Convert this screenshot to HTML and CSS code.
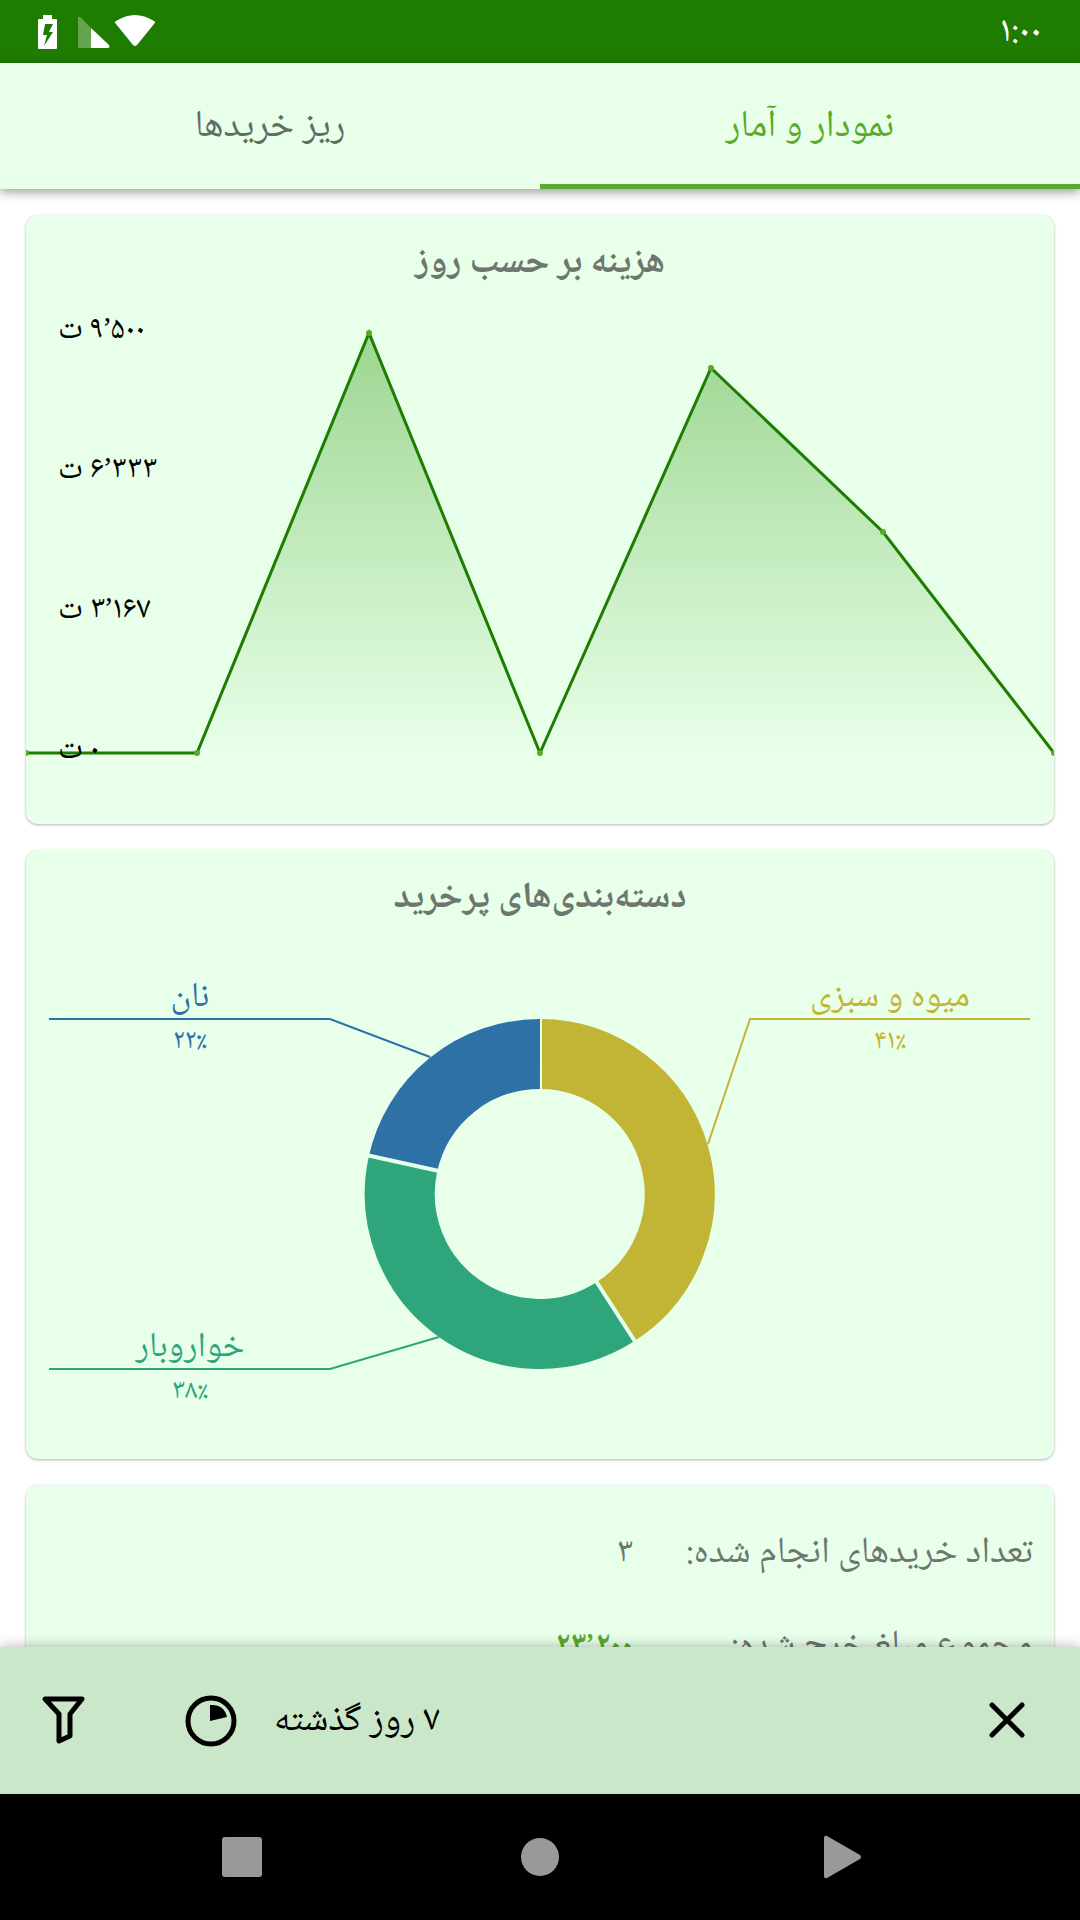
FILE: index.html
```html
<!DOCTYPE html>
<html lang="fa" dir="rtl">
<head>
<meta charset="utf-8">
<meta name="viewport" content="width=device-width, initial-scale=1">
<title>نمودار و آمار</title>
<link rel="stylesheet" href="styles.css">
</head>
<body>
<div class="app">
  <header class="status">
    <time class="clock" datetime="13:00">۱:۰۰</time>
    <svg class="status-icons" viewBox="0 0 120 36" aria-hidden="true">
      <path fill="#fff" fill-rule="evenodd" d="M7 1h9v4h4q1 0 1 1v28q0 1-1 1H3q-1 0-1-1V6q0-1 1-1h4zM9 10 7 21h4L8 32 17 18h-4l4-8z"/>
      <path fill="#64a44f" d="M42 4q0-2 2-1l11 11v20H43q-1 0-1-1z"/>
      <path fill="#fff" d="M55 14l18 17q1 3-1 3H55z"/>
      <path fill="#fff" d="M80 10q-2-2 0-3 19-12 38 0 2 1 0 3L101 31q-2 2-4 0z"/>
    </svg>
  </header>
  <nav class="tabs">
    <a class="tab tab-active" href="#stats">نمودار و آمار</a>
    <a class="tab" href="#list">ریز خریدها</a>
  </nav>
  <main class="content" id="stats">
    <section class="card">
      <h2 class="card-title">هزینه بر حسب روز</h2>
      <svg class="chart" viewBox="0 0 1028 529" role="img" aria-label="هزینه بر حسب روز">
        <defs>
          <linearGradient id="area" gradientUnits="userSpaceOnUse" x1="0" y1="38" x2="0" y2="458">
            <stop offset="0" stop-color="#9dd691"/>
            <stop offset="1" stop-color="#e8ffe9"/>
          </linearGradient>
        </defs>
        <path fill="url(#area)" d="M171 458 343 38 514 458 685 73 857 237 1028 458z"/>
        <path class="series" d="M0 458H171L343 38 514 458 685 73 857 237 1028 458"/>
        <g fill="#5aaa2e">
          <circle cx="0" cy="458" r="3"/><circle cx="171" cy="458" r="3"/><circle cx="343" cy="38" r="3"/>
          <circle cx="514" cy="458" r="3"/><circle cx="685" cy="73" r="3"/><circle cx="857" cy="237" r="3"/>
          <circle cx="1028" cy="458" r="3"/>
        </g>
        <g class="axis">
          <text x="32" y="47">۹٬۵۰۰ ت</text>
          <text x="32" y="187">۶٬۳۳۳ ت</text>
          <text x="32" y="327">۳٬۱۶۷ ت</text>
          <text x="32" y="467">۰ ت</text>
        </g>
      </svg>
    </section>
    <section class="card">
      <h2 class="card-title">دسته‌بندی‌های پرخرید</h2>
      <svg class="chart" viewBox="0 0 1028 529" role="img" aria-label="دسته‌بندی‌های پرخرید">
        <g class="ring">
          <path stroke="#c2b434" d="M514 124A140 140 0 0 1 589 382"/>
          <path stroke="#2ea57a" d="M589 382A140 140 0 0 1 377 234"/>
          <path stroke="#2d71a6" d="M377 234A140 140 0 0 1 514 124"/>
        </g>
        <path class="cut" d="M570 351 610 413M413 241 340 225"/>
        <path class="cut cut-thin" d="M515 86V162"/>
        <g class="leader">
          <path stroke="#2d71a6" d="M23 89H304L404 127"/>
          <path stroke="#c2b434" d="M1004 89H724L682 214"/>
          <path stroke="#2ea57a" d="M23 439H304L413 407"/>
        </g>
        <g class="slice">
          <text class="slice-name" fill="#2d71a6" x="164" y="81">نان</text>
          <text class="slice-pct" fill="#2d71a6" x="164" y="122">۲۲٪</text>
          <text class="slice-name" fill="#c2b434" x="864" y="81">میوه و سبزی</text>
          <text class="slice-pct" fill="#c2b434" x="864" y="122">۴۱٪</text>
          <text class="slice-name" fill="#2ea57a" x="164" y="431">خواروبار</text>
          <text class="slice-pct" fill="#2ea57a" x="164" y="472">۳۸٪</text>
        </g>
      </svg>
    </section>
    <section class="card">
      <dl class="totals">
        <dt>تعداد خریدهای انجام شده:</dt>
        <dd>۳</dd>
        <dt>مجموع مبلغ خرج شده:</dt>
        <dd class="amount">۲۳٬۲۰۰</dd>
      </dl>
    </section>
  </main>
  <footer class="toolbar">
    <button class="icon-button" type="button" aria-label="بستن">
      <svg viewBox="0 0 60 60"><path class="stroke" d="M15 14 45 44M45 14 15 44"/></svg>
    </button>
    <button class="range" type="button">
      <span>۷ روز گذشته</span>
      <svg viewBox="0 0 60 60" aria-hidden="true"><circle class="stroke" cx="30" cy="30" r="23"/><path d="M29 30V14q14-1 17 12z"/></svg>
    </button>
    <button class="icon-button" type="button" aria-label="فیلتر">
      <svg viewBox="0 0 60 60"><path class="stroke" d="M11 8H48L36 23V45L25 50V23z"/></svg>
    </button>
  </footer>
  <nav class="system">
    <button type="button" aria-label="بازگشت"><svg viewBox="0 0 48 48"><path d="M10 5q0-3 3-2L46 22q2 2 0 4L13 45q-3 1-3-2z"/></svg></button>
    <button type="button" aria-label="خانه"><svg viewBox="0 0 48 48"><circle cx="24" cy="24" r="19"/></svg></button>
    <button type="button" aria-label="برنامه‌ها"><svg viewBox="0 0 48 48"><rect x="4" y="4" width="40" height="40" rx="3"/></svg></button>
  </nav>
</div>
</body>
</html>
```
FILE: styles.css
```css
* { box-sizing: border-box; }

body {
  margin: 0;
  background: #fff;
  color: #6d776e;
  font-family: "Noto Naskh Arabic UI", "Noto Naskh Arabic", "Noto Sans Arabic", "DejaVu Sans", sans-serif;
  font-size: 37px;
}

button {
  border: 0;
  padding: 0;
  background: none;
  font: inherit;
  color: inherit;
}

svg { display: block; }

.app {
  display: flex;
  flex-direction: column;
  height: 100vh;
}

.status {
  flex: none;
  display: flex;
  align-items: center;
  justify-content: space-between;
  height: 63px;
  padding: 0 38px 0 36px;
  background: #1e7c00;
  color: #fff;
}

.clock { font-size: 37px; line-height: 48px; }

.status-icons { width: 120px; height: 36px; }

.tabs {
  flex: none;
  display: flex;
  height: 126px;
  background: #e8ffe9;
  box-shadow: 0 3px 10px rgba(0, 0, 0, 0.4);
  z-index: 1;
}

.tab {
  flex: 1;
  display: flex;
  align-items: center;
  justify-content: center;
  padding-top: 4px;
  border-bottom: 5px solid transparent;
  color: #626d62;
  font-size: 38px;
  text-decoration: none;
}

.tab-active {
  color: #5aaa2e;
  border-color: #5aaa2e;
}

.content {
  flex: 1;
  min-height: 0;
  overflow: hidden;
  display: flex;
  flex-direction: column;
  gap: 26px;
  padding: 26px 26px 0;
}

.card {
  flex: none;
  border-radius: 12px;
  background: #e8ffe9;
  box-shadow: 0 1px 3px rgba(0, 0, 0, 0.3);
}

.card-title {
  margin: 0;
  height: 80px;
  padding-top: 22px;
  font-size: 37px;
  line-height: 52px;
  text-align: center;
}

.chart { width: 100%; height: auto; }

.series { fill: none; stroke: #1e7c00; stroke-width: 3; }

.axis {
  fill: #000;
  font-size: 32px;
  text-anchor: end;
}

.ring { fill: none; stroke-width: 70; }

.cut { fill: none; stroke: #e8ffe9; stroke-width: 4; }

.cut-thin { stroke-width: 2; }

.leader { fill: none; stroke-width: 2; }

.slice { text-anchor: middle; }

.slice-name { font-size: 35px; }

.slice-pct { font-size: 28px; }

.totals {
  display: grid;
  grid-template-columns: 400px 1fr;
  row-gap: 40px;
  margin: 0;
  padding: 41px 21px;
  line-height: 53px;
}

.totals dd { margin: 0; font-size: 35px; }

.totals .amount { color: #5aaa2e; font-size: 32px; font-weight: bold; }

.toolbar {
  flex: none;
  display: flex;
  align-items: center;
  height: 147px;
  padding: 0 43px 0 34px;
  background: #cae7ca;
  box-shadow: 0 0 12px rgba(0, 0, 0, 0.3);
  color: #000;
  z-index: 1;
}

.toolbar svg { width: 60px; height: 60px; }

.stroke {
  fill: none;
  stroke: #000;
  stroke-width: 5;
  stroke-linecap: round;
  stroke-linejoin: round;
}

.range {
  display: flex;
  align-items: center;
  gap: 33px;
  margin-right: auto;
  margin-left: 87px;
}

.system {
  flex: none;
  display: flex;
  align-items: center;
  justify-content: center;
  gap: 250px;
  height: 126px;
  background: #000;
}

.system svg { width: 48px; height: 48px; fill: #999; }
```
